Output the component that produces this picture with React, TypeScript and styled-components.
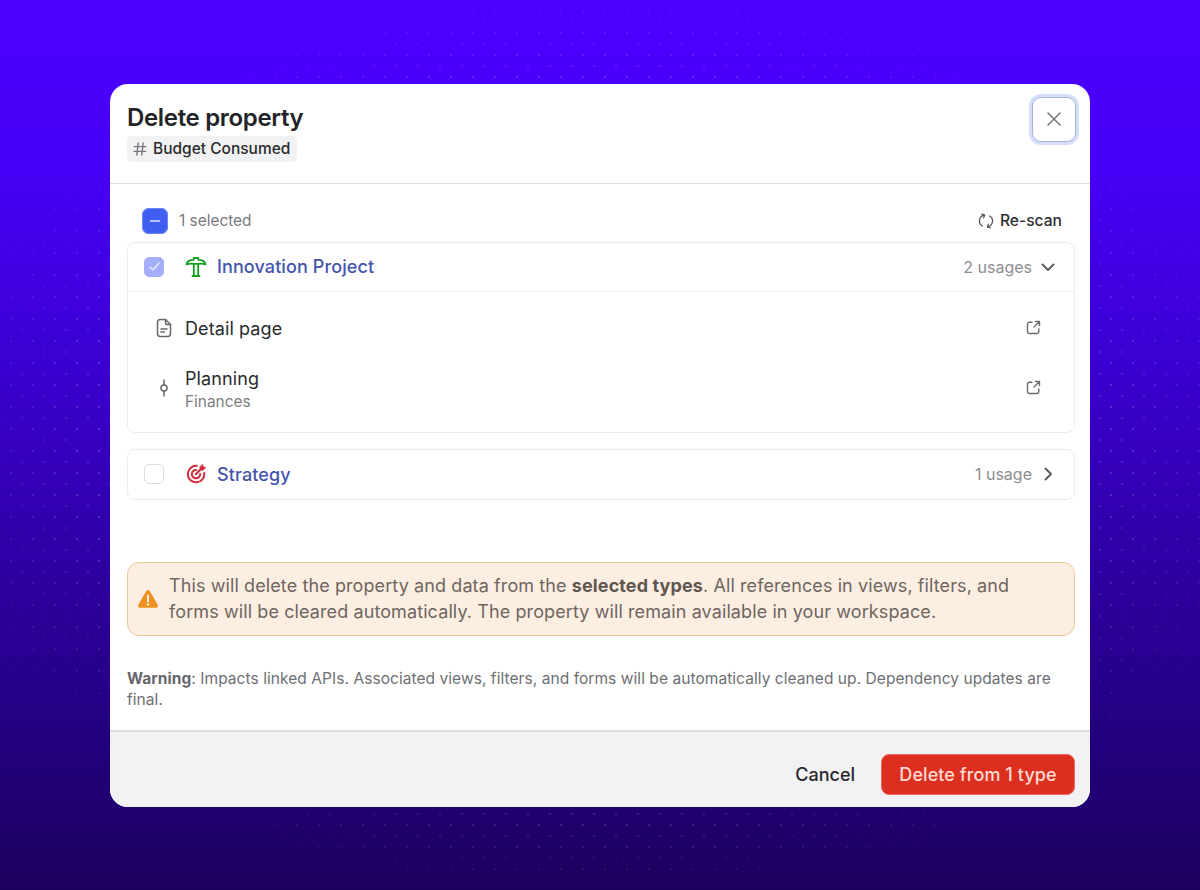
import React from "react";
import styled, { createGlobalStyle } from "styled-components";

const Global = createGlobalStyle`
  html, body { margin: 0; padding: 0; height: 100%; }
  body { font-family: Inter, "Liberation Sans", sans-serif; overflow: hidden; }
  #root { height: 100%; }
`;

const Page = styled.div`
  position: relative;
  height: 890px;
  display: flex;
  align-items: center;
  justify-content: center;
  background: linear-gradient(180deg, #4b00ff 0%, #4600f4 20%, #3a00cf 42%, #2d00a0 65%, #22007a 85%, #1d005e 100%);
  &::before {
    content: "";
    position: absolute;
    inset: 0;
    background-image:
      radial-gradient(circle, rgba(255, 255, 255, 0.17) 0.9px, transparent 1.3px),
      radial-gradient(circle, rgba(255, 255, 255, 0.12) 0.9px, transparent 1.3px);
    background-size: 22px 22px, 22px 22px;
    background-position: 0 0, 11px 11px;
    -webkit-mask-image: radial-gradient(ellipse 744px 516px at 50% 50%, #000 70%, transparent 92%);
    mask-image: radial-gradient(ellipse 744px 516px at 50% 50%, #000 70%, transparent 92%);
  }
`;

const Modal = styled.div`
  position: relative;
  width: 980px;
  height: 723px;
  background: #fff;
  border-radius: 18px;
  overflow: hidden;
  display: flex;
  flex-direction: column;
`;

const Header = styled.header`
  height: 100px;
  box-sizing: border-box;
  border-bottom: 1px solid #dfdfe1;
  padding: 18px 14px 0 17px;
  display: flex;
  justify-content: space-between;
  align-items: flex-start;
`;

const HeaderText = styled.div`
  display: flex;
  flex-direction: column;
  align-items: flex-start;
  gap: 2px;
`;

const Title = styled.h1`
  margin: 0;
  font-size: 24px;
  line-height: 32px;
  font-weight: 600;
  letter-spacing: -0.33px;
  color: #232427;
`;

const Tag = styled.div`
  display: flex;
  align-items: center;
  gap: 6px;
  height: 26px;
  padding: 0 7px 0 6px;
  border-radius: 5px;
  background: #f1f2f3;
  font-size: 15.5px;
  font-weight: 500;
  color: #2a2b2e;
`;

const CloseButton = styled.button`
  width: 44px;
  height: 45px;
  margin-top: -5px;
  padding: 0;
  display: flex;
  align-items: center;
  justify-content: center;
  background: #fff;
  border: 1px solid #a9b3d6;
  border-radius: 9px;
  box-shadow: 0 0 0 3px #d5dffa;
  color: #77787d;
`;

const Body = styled.div`
  flex: 1;
  display: flex;
  flex-direction: column;
  padding: 24px 15px 0 17px;
`;

const SelectRow = styled.div`
  display: flex;
  align-items: center;
  justify-content: space-between;
  height: 26px;
  padding: 0 13px 0 15px;
  margin-bottom: 8px;
`;

const SelectLeft = styled.div`
  display: flex;
  align-items: center;
  gap: 11px;
  font-size: 15.4px;
  color: #77787c;
`;

const MasterCheck = styled.span`
  width: 26px;
  height: 26px;
  border-radius: 7px;
  background: #3f5ff0;
  box-shadow: inset 0 0 0 1px #6d85f7;
  display: flex;
  align-items: center;
  justify-content: center;
`;

const Rescan = styled.div`
  display: flex;
  align-items: center;
  gap: 6px;
  font-size: 15.6px;
  font-weight: 500;
  color: #2c2d30;
`;

const Card = styled.section<{ $mb?: number }>`
  border: 1px solid #ececee;
  border-radius: 8px;
  margin-bottom: ${(p) => p.$mb ?? 0}px;
`;

const CardHead = styled.div<{ $open?: boolean }>`
  height: 49px;
  box-sizing: border-box;
  display: flex;
  align-items: center;
  padding: 0 18px 0 16px;
  ${(p) => (p.$open ? "border-bottom: 1px solid #ededef;" : "")}
`;

const RowCheck = styled.span<{ $checked?: boolean }>`
  width: 20px;
  height: 20px;
  box-sizing: border-box;
  border-radius: 5px;
  display: flex;
  align-items: center;
  justify-content: center;
  background: ${(p) => (p.$checked ? "#a5aef8" : "#fff")};
  border: 1px solid ${(p) => (p.$checked ? "#a5aef8" : "#dcdce0")};
  margin-right: 21px;
`;

const TypeIcon = styled.span`
  width: 22px;
  height: 22px;
  display: flex;
  align-items: center;
  justify-content: center;
  margin-right: 10px;
`;

const TypeName = styled.span`
  flex: 1;
  font-size: 18px;
  font-weight: 500;
  letter-spacing: 0.1px;
  color: #4354ad;
`;

const Usage = styled.span`
  font-size: 16px;
  color: #8d8e92;
  margin-right: 8px;
`;

const Chevron = styled.span`
  display: flex;
  color: #56575b;
`;

const CardBody = styled.div`
  height: 140px;
  box-sizing: border-box;
  padding: 12px 33px 0 26px;
  display: flex;
  flex-direction: column;
`;

const UsageRow = styled.div<{ $h: number }>`
  height: ${(p) => p.$h}px;
  display: flex;
  align-items: center;
`;

const UsageIcon = styled.span`
  width: 20px;
  display: flex;
  justify-content: center;
  color: #66676b;
  margin-right: 11px;
`;

const UsageText = styled.div<{ $pt: number }>`
  flex: 1;
  display: flex;
  flex-direction: column;
  padding-top: ${(p) => p.$pt}px;
`;

const UsageTitle = styled.span`
  font-size: 18px;
  line-height: 24px;
  letter-spacing: 0.1px;
  color: #2a2b2e;
`;

const UsageSub = styled.span`
  margin-top: 1px;
  font-size: 15.4px;
  line-height: 20px;
  color: #7c7d81;
`;

const LinkIcon = styled.span`
  display: flex;
  color: #6b6c70;
`;

const Notice = styled.div`
  height: 74px;
  box-sizing: border-box;
  margin-top: 62px;
  display: flex;
  align-items: center;
  gap: 10px;
  padding: 0 40px 0 9px;
  border: 1px solid #ecc99a;
  border-radius: 12px;
  background: #fdeee2;
  font-size: 18px;
  line-height: 26px;
  letter-spacing: 0.1px;
  color: #6e665f;
  b { font-weight: 700; color: #5f574f; }
`;

const NoticeText = styled.div`
  flex: 1;
  padding-top: 1px;
`;

const Warning = styled.p`
  margin: 32px 0 0;
  font-size: 15.5px;
  line-height: 21px;
  letter-spacing: 0.06px;
  color: #6e6f73;
  b { font-weight: 700; color: #66676b; }
`;

const Footer = styled.footer`
  height: 77px;
  box-sizing: border-box;
  border-top: 2px solid #dcdcde;
  background: #f2f2f4;
  display: flex;
  align-items: center;
  justify-content: flex-end;
  gap: 26px;
  padding: 11px 15px 0 0;
`;

const Cancel = styled.button`
  border: 0;
  background: none;
  padding: 0;
  font: 500 18px Inter, sans-serif;
  color: #26272a;
`;

const Danger = styled.button`
  height: 41px;
  width: 194px;
  border: 1px solid #ee6a58;
  border-radius: 8px;
  background: #dd2f20;
  font: 500 18px Inter, sans-serif;
  letter-spacing: 0.08px;
  color: #ffdcd3;
`;

const SignpostIcon = () => (
  <svg width="22" height="22" viewBox="0 0 22 22" fill="none" stroke="#13a01e" strokeWidth="1.800" strokeLinejoin="round" strokeLinecap="round">
    <path d="M1.500 8.500C2 5.500 5 3.800 8.800 3.800V2h4.400v1.800c3.800 0 6.800 1.700 7.300 4.700-2.500-1-5-1.200-7.300-.6H8.800c-2.300-.6-4.800-.4-7.300.6z" />
    <path d="M8.800 8v11.500M13.200 8v11.500M7.500 20h7" />
  </svg>
);

const TargetIcon = () => (
  <svg width="22" height="22" viewBox="0 0 22 22" fill="none" stroke="#cf2c3c" strokeWidth="2" strokeLinecap="round">
    <path d="M11.800 2.800A8.300 8.300 0 1 0 19.300 10" />
    <path d="M11.200 6.900A4.200 4.200 0 1 0 15.200 11" />
    <path d="M10.800 11.200 16 6" />
    <path d="M15 4.200l.4 2.600 2.600.4 2.500-2.500-2.300-.7-.7-2.300z" fill="#cf2c3c" strokeWidth="1" strokeLinejoin="round" />
  </svg>
);

const Close = () => (
  <svg width="16" height="16" viewBox="0 0 16 16" fill="none" stroke="currentColor" strokeWidth="1.500" strokeLinecap="round">
    <path d="M2 2l12 12M14 2 2 14" />
  </svg>
);

const HashIcon = () => (
  <svg width="14" height="14" viewBox="0 0 14 14" fill="none" stroke="#76777b" strokeWidth="1.400" strokeLinecap="round">
    <path d="M5.200 1 3.800 13M10.200 1 8.800 13M1.300 4.600h11.600M1 9.400h11.600" />
  </svg>
);

const RescanIcon = () => (
  <svg width="16" height="16" viewBox="0 0 16 16" fill="none" stroke="#55565a" strokeWidth="1.300" strokeLinecap="round" strokeLinejoin="round">
    <path d="M6.500 2.200A5.800 5.800 0 0 0 4.400 13" />
    <path d="M9.500 13.800A5.800 5.800 0 0 0 11.600 3" />
    <path d="M3.800 1.200 6.600 2.200 5.600 4.800M12.200 14.800 9.400 13.800 10.400 11.200" />
  </svg>
);

const Minus = () => (
  <svg width="12" height="12" viewBox="0 0 12 12" fill="none" stroke="#e4e9ff" strokeWidth="1.600" strokeLinecap="round">
    <path d="M1.500 6h9" />
  </svg>
);

const Check = () => (
  <svg width="13" height="13" viewBox="0 0 13 13" fill="none" stroke="#e8eaff" strokeWidth="1.500" strokeLinecap="round" strokeLinejoin="round">
    <path d="M2 7l3 3 6-7" />
  </svg>
);

const ChevronDown = () => (
  <svg width="16" height="16" viewBox="0 0 16 16" fill="none" stroke="currentColor" strokeWidth="1.800" strokeLinecap="round" strokeLinejoin="round">
    <path d="M2.500 5.500 8 11l5.500-5.500" />
  </svg>
);

const ChevronRight = () => (
  <svg width="16" height="16" viewBox="0 0 16 16" fill="none" stroke="currentColor" strokeWidth="1.800" strokeLinecap="round" strokeLinejoin="round">
    <path d="M5.500 2.500 11 8l-5.500 5.500" />
  </svg>
);

const DocIcon = () => (
  <svg width="18" height="20" viewBox="0 0 18 20" fill="none" stroke="currentColor" strokeWidth="1.500" strokeLinecap="round" strokeLinejoin="round">
    <path d="M10.500 1.500H5.200A2.700 2.700 0 0 0 2.500 4.200v11.600a2.700 2.700 0 0 0 2.700 2.700h7.600a2.700 2.700 0 0 0 2.700-2.700V6.500z" />
    <path d="M10.500 1.500v3.200a1.800 1.800 0 0 0 1.800 1.800h3.200M6 11h6M6 14h3.500" />
  </svg>
);

const CommitIcon = () => (
  <svg width="10" height="20" viewBox="0 0 10 20" fill="none" stroke="currentColor" strokeWidth="1.500" strokeLinecap="round">
    <circle cx="5" cy="10" r="3" />
    <path d="M5 2v5M5 13v5" />
  </svg>
);

const ExternalIcon = () => (
  <svg width="15" height="15" viewBox="0 0 15 15" fill="none" stroke="currentColor" strokeWidth="1.400" strokeLinecap="round" strokeLinejoin="round">
    <path d="M6 2.200H3.200A1.700 1.700 0 0 0 1.500 3.900v7.900a1.700 1.700 0 0 0 1.700 1.700h7.900a1.700 1.700 0 0 0 1.700-1.700V9" />
    <path d="M8 7 13.500 1.500M9.500 1.500h4v4" />
  </svg>
);

const AlertIcon = () => (
  <svg width="22" height="20" viewBox="0 0 22 20">
    <path d="M9.300 2 1.300 15.800A2 2 0 0 0 3 18.800h16a2 2 0 0 0 1.700-3L12.700 2a2 2 0 0 0-3.400 0z" fill="#ee9120" />
    <path d="M11 6.500v6" stroke="#fdeee2" strokeWidth="2" strokeLinecap="round" />
    <circle cx="11" cy="15.500" r="1.200" fill="#fdeee2" />
  </svg>
);

export default function App() {
  return (
    <Page>
      <Global />
      <Modal>
        <Header>
          <HeaderText>
            <Title>Delete property</Title>
            <Tag>
              <HashIcon />
              Budget Consumed
            </Tag>
          </HeaderText>
          <CloseButton aria-label="Close">
            <Close />
          </CloseButton>
        </Header>
        <Body>
          <SelectRow>
            <SelectLeft>
              <MasterCheck>
                <Minus />
              </MasterCheck>
              1 selected
            </SelectLeft>
            <Rescan>
              <RescanIcon />
              Re-scan
            </Rescan>
          </SelectRow>
          <Card $mb={16}>
            <CardHead $open>
              <RowCheck $checked>
                <Check />
              </RowCheck>
              <TypeIcon>
                <SignpostIcon />
              </TypeIcon>
              <TypeName>Innovation Project</TypeName>
              <Usage>2 usages</Usage>
              <Chevron>
                <ChevronDown />
              </Chevron>
            </CardHead>
            <CardBody>
              <UsageRow $h={48}>
                <UsageIcon>
                  <DocIcon />
                </UsageIcon>
                <UsageText $pt={2}>
                  <UsageTitle>Detail page</UsageTitle>
                </UsageText>
                <LinkIcon>
                  <ExternalIcon />
                </LinkIcon>
              </UsageRow>
              <UsageRow $h={72}>
                <UsageIcon>
                  <CommitIcon />
                </UsageIcon>
                <UsageText $pt={4}>
                  <UsageTitle>Planning</UsageTitle>
                  <UsageSub>Finances</UsageSub>
                </UsageText>
                <LinkIcon>
                  <ExternalIcon />
                </LinkIcon>
              </UsageRow>
            </CardBody>
          </Card>
          <Card>
            <CardHead>
              <RowCheck />
              <TypeIcon>
                <TargetIcon />
              </TypeIcon>
              <TypeName>Strategy</TypeName>
              <Usage>1 usage</Usage>
              <Chevron>
                <ChevronRight />
              </Chevron>
            </CardHead>
          </Card>
          <Notice>
            <AlertIcon />
            <NoticeText>
              This will delete the property and data from the <b>selected types</b>. All references in views, filters, and forms will be cleared automatically. The property will remain available in your workspace.
            </NoticeText>
          </Notice>
          <Warning>
            <b>Warning</b>: Impacts linked APIs. Associated views, filters, and forms will be automatically cleaned up. Dependency updates are final.
          </Warning>
        </Body>
        <Footer>
          <Cancel>Cancel</Cancel>
          <Danger>Delete from 1 type</Danger>
        </Footer>
      </Modal>
    </Page>
  );
}
